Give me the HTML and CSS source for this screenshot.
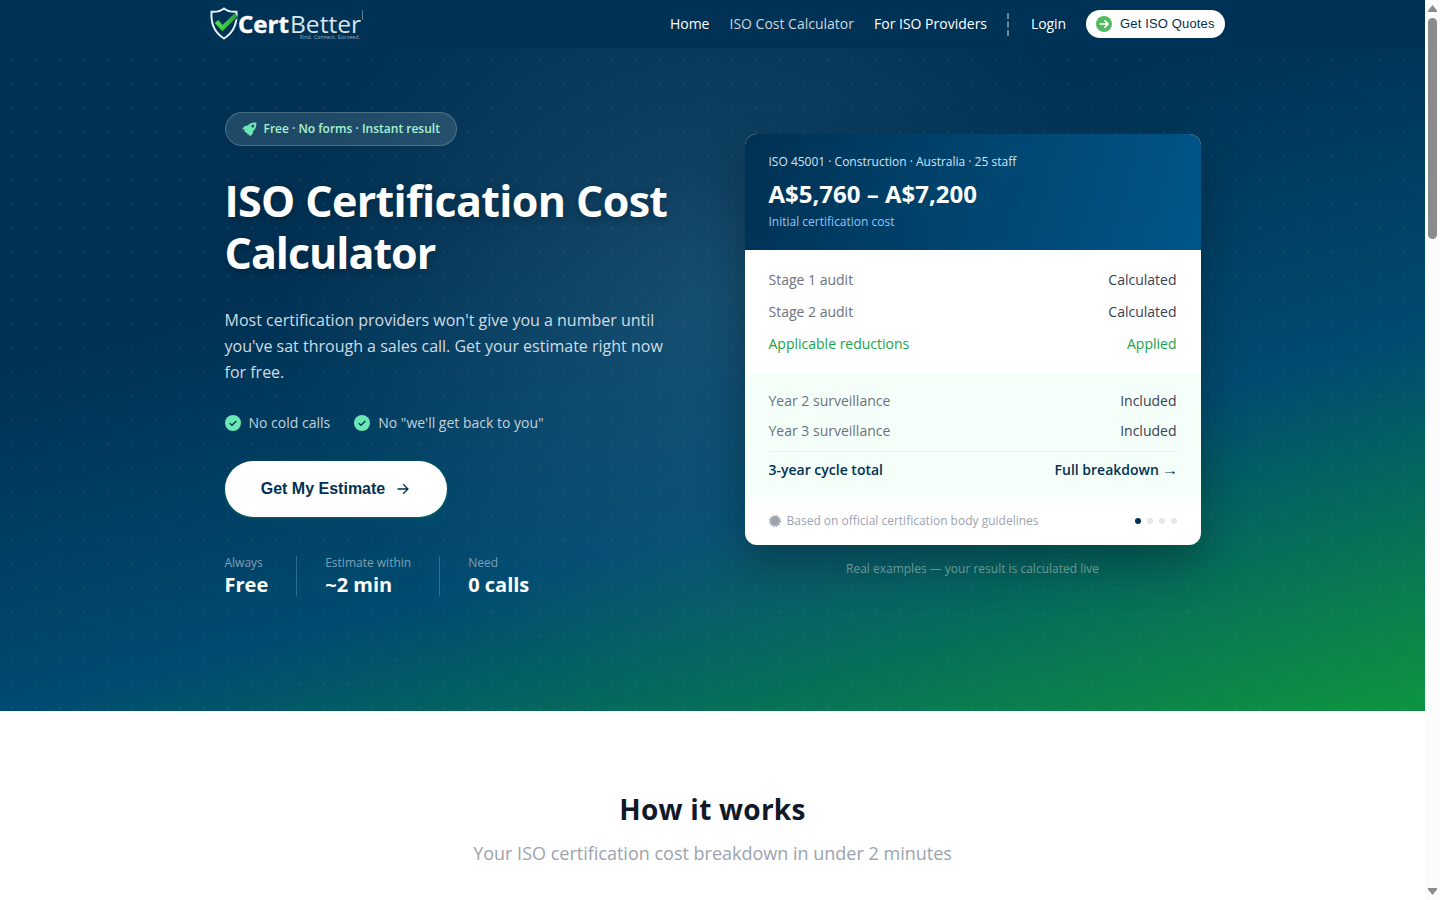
FILE: index.html
```html
<!DOCTYPE html>
<html lang="en">
<head>
    <meta charset="UTF-8">
    <meta name="viewport" content="width=device-width, initial-scale=1.0">
    <title>ISO Certification Cost Calculator | CertBetter</title>
    <link rel="stylesheet" href="styles.css">
</head>
<body>
    <div class="page">
        <header class="navbar">
            <div class="navbar-inner">
                <a href="#" class="logo">
                    <svg width="154" height="34" viewBox="0 0 154 34">
                        <defs>
                            <linearGradient id="tick" x1="0" y1="0" x2="1" y2="0">
                                <stop offset="0" stop-color="#4be04b"/>
                                <stop offset="1" stop-color="#2f9e3f"/>
                            </linearGradient>
                        </defs>
                        <path d="M14 1.5 Q9 5.5 1.6 4.7 Q0 23 14 31.5 Q28 23 26.4 4.7 Q19 5.5 14 1.5Z" fill="none" stroke="#e6eef3" stroke-width="2"/>
                        <path d="M6.5 14.5 L12.5 21 L26 8" fill="none" stroke="#003255" stroke-width="6.5"/>
                        <path d="M6.5 14.5 L12.5 21 L26 8" fill="none" stroke="url(#tick)" stroke-width="4.4"/>
                        <text x="28" y="26" class="logo-bold" textLength="51" lengthAdjust="spacingAndGlyphs">Cert</text>
                        <text x="80" y="26" class="logo-light" textLength="71" lengthAdjust="spacingAndGlyphs">Better</text>
                        <text x="90" y="32" class="logo-tag" textLength="60">Find. Connect. Succeed.</text>
                        <path d="M152.5 3V13" stroke="#5d7d94" stroke-width="1"/>
                    </svg>
                </a>
                <nav class="nav-links">
                    <a href="#">Home</a>
                    <a href="#" class="current">ISO Cost Calculator</a>
                    <a href="#">For ISO Providers</a>
                    <span class="nav-divider"></span>
                    <a href="#" class="login">Login</a>
                    <a href="#" class="quote-btn">
                        <svg width="16" height="16" viewBox="0 0 16 16">
                            <circle cx="8" cy="8" r="8" fill="#55b963"/>
                            <path d="M3.5 8H12M8.4 4.4L12 8L8.4 11.6" fill="none" stroke="#fff" stroke-width="1.6"/>
                        </svg>
                        <span>Get ISO Quotes</span>
                    </a>
                </nav>
            </div>
        </header>

        <section class="hero">
            <div class="hero-inner">
                <div class="hero-left">
                    <div class="badge">
                        <svg width="15" height="15" viewBox="0 0 15 15">
                            <path fill="#6ee7b7" fill-rule="evenodd" d="M14.2.6C11 .1 8 .8 5.9 3.4L2.8 4L0 7.2L3 7.8L2.2 9.4L3.6 10.2L5.2 11.2L5.8 13L7.2 12.2L7.6 14.6L10.6 12L11.2 9.2C13.8 7 14.7 4 14.2.6ZM10.8 2.8A1.4 1.4 0 1 1 10.8 5.6A1.4 1.4 0 1 1 10.8 2.8Z"/>
                        </svg>
                        <span>Free · No forms · Instant result</span>
                    </div>
                    <h1>ISO Certification Cost <span class="line-two">Calculator</span></h1>
                    <p class="lead">Most certification providers won't give you a number until you've sat through a sales call. Get your estimate right now for free.</p>
                    <ul class="checks">
                        <li>
                            <svg width="16" height="16" viewBox="0 0 16 16">
                                <circle cx="8" cy="8" r="8" fill="#6ee7b7"/>
                                <path d="M4.7 8.2L7 10.3L11.3 6" fill="none" stroke="#003b60" stroke-width="1.5"/>
                            </svg>
                            No cold calls
                        </li>
                        <li>
                            <svg width="16" height="16" viewBox="0 0 16 16">
                                <circle cx="8" cy="8" r="8" fill="#6ee7b7"/>
                                <path d="M4.7 8.2L7 10.3L11.3 6" fill="none" stroke="#003b60" stroke-width="1.5"/>
                            </svg>
                            No "we'll get back to you"
                        </li>
                    </ul>
                    <button type="button" class="cta">
                        Get My Estimate
                        <svg width="12" height="12" viewBox="0 0 12 12">
                            <path d="M0.5 6H11M6.2 1.2L11 6L6.2 10.8" fill="none" stroke="#003153" stroke-width="1.3"/>
                        </svg>
                    </button>
                    <div class="stats">
                        <div class="stat"><span>Always</span><strong>Free</strong></div>
                        <div class="stat"><span>Estimate within</span><strong>~2 min</strong></div>
                        <div class="stat"><span>Need</span><strong>0 calls</strong></div>
                    </div>
                </div>

                <div class="hero-right">
                    <div class="card">
                        <div class="card-head">
                            <p class="card-meta">ISO 45001 · Construction · Australia · 25 staff</p>
                            <p class="card-price">A$5,760 – A$7,200</p>
                            <p class="card-sub">Initial certification cost</p>
                        </div>
                        <div class="card-body">
                            <div class="row"><span>Stage 1 audit</span><b>Calculated</b></div>
                            <div class="row"><span>Stage 2 audit</span><b>Calculated</b></div>
                            <div class="row green"><span>Applicable reductions</span><b>Applied</b></div>
                        </div>
                        <div class="card-cycle">
                            <div class="row"><span>Year 2 surveillance</span><b>Included</b></div>
                            <div class="row"><span>Year 3 surveillance</span><b>Included</b></div>
                            <div class="row total"><span>3-year cycle total</span><b>Full breakdown <span class="arrow">→</span></b></div>
                        </div>
                        <div class="card-foot">
                            <svg width="12" height="12" viewBox="0 0 12 12">
                                <circle cx="6" cy="6" r="4.7" fill="#9ca3af"/>
                                <circle cx="6" cy="6" r="5.2" fill="none" stroke="#9ca3af" stroke-width="1.6" stroke-dasharray="1.6 1.12"/>
                            </svg>
                            <span>Based on official certification body guidelines</span>
                            <div class="dots"><i class="active"></i><i></i><i></i><i></i></div>
                        </div>
                    </div>
                    <p class="card-note">Real examples — your result is calculated live</p>
                </div>
            </div>
        </section>

        <section class="how">
            <h2>How it works</h2>
            <p>Your ISO certification cost breakdown in under 2 minutes</p>
        </section>
    </div>

    <div class="scrollbar">
        <svg width="9" height="7" viewBox="0 0 9 7"><path d="M4.5 0L9 5.5V7H0V5.5Z" fill="#8b8b8b"/></svg>
        <div class="thumb"></div>
        <svg width="9" height="7" viewBox="0 0 9 7"><path d="M4.5 7L9 1.5V0H0V1.5Z" fill="#8b8b8b"/></svg>
    </div>
</body>
</html>
```
FILE: styles.css
```css
* {
    box-sizing: border-box;
}
body {
    margin: 0;
    height: 900px;
    display: flex;
    overflow: hidden;
    font-family: "Open Sans", sans-serif;
    color: #111827;
    background: #fff;
}
h1, h2, p, ul {
    margin: 0;
    padding: 0;
}
a {
    color: inherit;
    text-decoration: none;
}
svg {
    display: block;
    flex: none;
}
.page {
    flex: 1;
    min-width: 0;
}

/* Navbar */
.navbar {
    height: 48px;
    background: #003255;
}
.navbar-inner {
    height: 48px;
    margin: 0 200px 0 210px;
    display: flex;
    align-items: center;
    justify-content: space-between;
}
.logo-bold {
    font: 700 24px "Open Sans", sans-serif;
    fill: #fff;
    stroke: #fff;
    stroke-width: 0.4px;
}
.logo-light {
    font: 400 24px "Open Sans", sans-serif;
    fill: #d9e3ea;
}
.logo-tag {
    font: 400 5px "Open Sans", sans-serif;
    fill: #a9bccb;
}
.nav-links {
    display: flex;
    align-items: center;
    gap: 20px;
    font-size: 14px;
    line-height: 20px;
    font-weight: 500;
    color: #fff;
}
.nav-links > a:not(.quote-btn) {
    padding-bottom: 1px;
}
.nav-links .current {
    color: #ccd6dd;
}
.nav-divider {
    height: 23px;
    margin-right: 2px;
    border-left: 2px dashed #6b879b;
}
.nav-links .login {
    letter-spacing: -0.1px;
}
.nav-links .quote-btn {
    display: flex;
    align-items: center;
    gap: 8px;
    height: 28px;
    width: 139px;
    padding-left: 10px;
    border-radius: 14px;
    background: #fff;
    color: #003153;
    font-family: "Liberation Sans", sans-serif;
    font-size: 13px;
    font-weight: 400;
    letter-spacing: 0.15px;
}

/* Hero */
.hero {
    height: 663px;
    padding-top: 64px;
    background:
        radial-gradient(circle, rgba(255, 255, 255, 0.05) 1px, transparent 1.1px) 0 0 / 24px 24px,
        radial-gradient(ellipse 430px 400px at 710px 245px, rgba(80, 130, 160, 0.28), transparent),
        linear-gradient(165deg, #003153 0%, #003153 30%, #004b70 64%, #0e9540 100%);
}
.hero-inner {
    width: 976px;
    margin: 0 auto;
    display: grid;
    grid-template-columns: 1fr 1fr;
    gap: 64px;
    align-items: start;
}
.hero-right {
    margin-top: 22px;
}
.badge {
    display: inline-flex;
    align-items: center;
    gap: 7px;
    height: 34px;
    padding: 0 16px;
    border: 1px solid rgba(255, 255, 255, 0.2);
    border-radius: 17px;
    background: rgba(255, 255, 255, 0.12);
    color: #a7f3d0;
    font-size: 12px;
    font-weight: 600;
    vertical-align: top;
}
.badge span {
    padding-bottom: 1px;
}
h1 {
    margin-top: 29px;
    font-size: 43px;
    line-height: 52px;
    font-weight: 700;
    letter-spacing: -0.65px;
    color: #fff;
    white-space: nowrap;
    text-shadow: 0 2px 8px rgba(0, 0, 0, 0.3);
}
.line-two {
    display: block;
    letter-spacing: -1px;
}
.lead {
    margin-top: 28px;
    font-size: 16px;
    line-height: 26px;
    color: #d0dce4;
}
.checks {
    margin-top: 28px;
    display: flex;
    gap: 24px;
    list-style: none;
    font-size: 14px;
    line-height: 20px;
    color: #c3d1db;
}
.checks li {
    display: flex;
    align-items: center;
    gap: 8px;
}
.cta {
    display: flex;
    align-items: center;
    justify-content: center;
    gap: 12px;
    width: 222px;
    height: 56px;
    margin-top: 28px;
    padding: 0 1px 0 0;
    border: none;
    border-radius: 28px;
    background: #fff;
    color: #003153;
    font: 700 16px "Liberation Sans", sans-serif;
    box-shadow: 0 1px 3px rgba(16, 150, 80, 0.4);
}
.stats {
    margin-top: 39px;
    display: flex;
}
.stat {
    height: 40px;
    padding-right: 28px;
    margin-right: 28px;
    border-right: 1px solid rgba(255, 255, 255, 0.2);
}
.stat:last-child {
    border: none;
}
.stat span {
    display: block;
    font-size: 12px;
    line-height: 14px;
    color: #7f9fb5;
}
.stat strong {
    display: block;
    font-size: 20px;
    line-height: 30px;
    color: #fff;
}

/* Estimate card */
.card {
    border-radius: 12px;
    background: #fff;
    overflow: hidden;
    box-shadow: 0 20px 45px rgba(0, 0, 0, 0.28);
}
.card-head {
    height: 116px;
    padding: 19px 24px;
    background: linear-gradient(105deg, #003153, #00456f 50%, #00568a);
    color: #fff;
}
.card-meta {
    font-size: 12px;
    line-height: 18px;
    color: #cfe5fb;
}
.card-price {
    margin-top: 6px;
    font-size: 24px;
    line-height: 34px;
    font-weight: 700;
}
.card-sub {
    margin-top: 2px;
    font-size: 12px;
    line-height: 18px;
    color: #93c5fd;
}
.card-body {
    height: 124px;
    padding: 14px 24px 0;
}
.card-cycle {
    height: 123px;
    padding: 12px 24px 0;
    background: #f5fff9;
}
.row {
    display: flex;
    justify-content: space-between;
    font-size: 14px;
    line-height: 32px;
    color: #6b7280;
}
.row b {
    font-weight: 400;
    color: #374151;
}
.card-cycle .row {
    line-height: 30px;
}
.row.green, .row.green b {
    color: #16a34a;
}
.card-cycle .row.total {
    margin-top: 5px;
    padding-top: 3px;
    border-top: 1px solid #e2f7ec;
}
.row.total, .row.total b {
    font-weight: 600;
    color: #003153;
}
.arrow {
    display: inline-block;
    font-family: "Liberation Sans", sans-serif;
    font-weight: 400;
    line-height: 1;
    transform: scaleX(1.2);
}
.card-foot {
    height: 48px;
    padding: 0 24px;
    display: flex;
    align-items: center;
    gap: 6px;
    font-size: 12px;
    color: #9ca3af;
}
.card-foot span {
    padding-bottom: 1px;
}
.dots {
    margin-left: auto;
    display: flex;
    gap: 6px;
}
.dots i {
    width: 6px;
    height: 6px;
    border-radius: 50%;
    background: #e5e7eb;
}
.dots .active {
    background: #003153;
}
.card-note {
    margin-top: 16px;
    font-size: 12px;
    line-height: 16px;
    text-align: center;
    color: rgba(255, 255, 255, 0.4);
}

/* How it works */
.how {
    padding-top: 77px;
    text-align: center;
}
.how h2 {
    font-size: 28px;
    line-height: 42px;
    font-weight: 700;
    letter-spacing: 0.25px;
}
.how p {
    margin-top: 9px;
    font-size: 18px;
    line-height: 28px;
    color: #9ca3af;
}

/* Scrollbar */
.scrollbar {
    flex: none;
    width: 15px;
    padding: 5px 0;
    display: flex;
    flex-direction: column;
    align-items: center;
    background: #fcfcfc;
}
.thumb {
    width: 9px;
    height: 221px;
    margin-top: 6px;
    margin-bottom: auto;
    border-radius: 5px;
    background: #8b8b8b;
}
```
